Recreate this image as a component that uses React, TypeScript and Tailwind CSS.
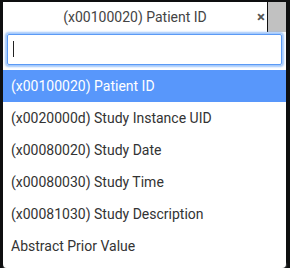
import { useState } from "react"

const options = [
  "(x00100020) Patient ID",
  "(x0020000d) Study Instance UID",
  "(x00080020) Study Date",
  "(x00080030) Study Time",
  "(x00081030) Study Description",
  "Abstract Prior Value",
]

export default function App() {
  const [active, setActive] = useState(0)
  const [term, setTerm] = useState("")

  return (
    <div className="relative w-[290px] h-[268px] overflow-hidden bg-[#0e0f10] font-['Roboto',sans-serif]">
      {/* image noise behind the panel */}
      <svg className="absolute left-0 bottom-0" width="290" height="10" viewBox="0 0 290 10">
        <defs>
          <filter id="blur" x="-20%" y="-50%" width="140%" height="200%">
            <feGaussianBlur stdDeviation="1.2" />
          </filter>
        </defs>
        <g filter="url(#blur)" fill="#d8d8d8">
          <ellipse cx="18" cy="9" rx="14" ry="3" />
          <ellipse cx="62" cy="7" rx="22" ry="4" />
          <ellipse cx="110" cy="9" rx="12" ry="3" fill="#8a8a8a" />
          <ellipse cx="222" cy="8" rx="18" ry="3" fill="#9a9a9a" />
          <ellipse cx="270" cy="7" rx="16" ry="4" />
        </g>
      </svg>

      <div className="relative ml-[3px] mt-[2px] w-[283px]">
        {/* Header */}
        <div className="flex h-[30px]">
          <div className="flex-1 bg-white flex items-center">
            <span className="flex-1 text-center text-[14px] text-[#444] pl-[10px]">
              {options[active]}
            </span>
            <span className="w-[10px] text-[15px] font-bold text-[#555] leading-none">×</span>
          </div>
          <div className="w-px bg-[#111]" />
          <div className="w-[18px] bg-[#c1c1c1]" />
        </div>

        {/* Dropdown */}
        <div className="bg-white rounded-b-[4px] pb-[6px]">
          <div className="relative px-[4px] pt-[2px] pb-[5px]">
            <input
              value={term}
              onChange={(e) => setTerm(e.target.value)}
              className="w-full h-[31px] border border-[#5b9af5] rounded-[2px] px-[5px] text-[14px] text-[#333] outline-none shadow-[0_0_2px_2px_rgba(120,175,250,0.7)]"
            />
            {term === "" && <span className="absolute left-[10px] top-[9px] w-px h-[16px] bg-[#222]" />}
          </div>
          <ul>
            {options
              .filter((o) => o.toLowerCase().includes(term.toLowerCase()))
              .map((o, i) => (
                <li
                  key={o}
                  onMouseEnter={() => setActive(i)}
                  className={`h-[32px] flex items-center pl-[8px] text-[14px] ${
                    i === active ? "bg-[#5897fb] text-white" : "text-[#333]"
                  }`}
                >
                  {o}
                </li>
              ))}
          </ul>
        </div>
      </div>
    </div>
  )
}
